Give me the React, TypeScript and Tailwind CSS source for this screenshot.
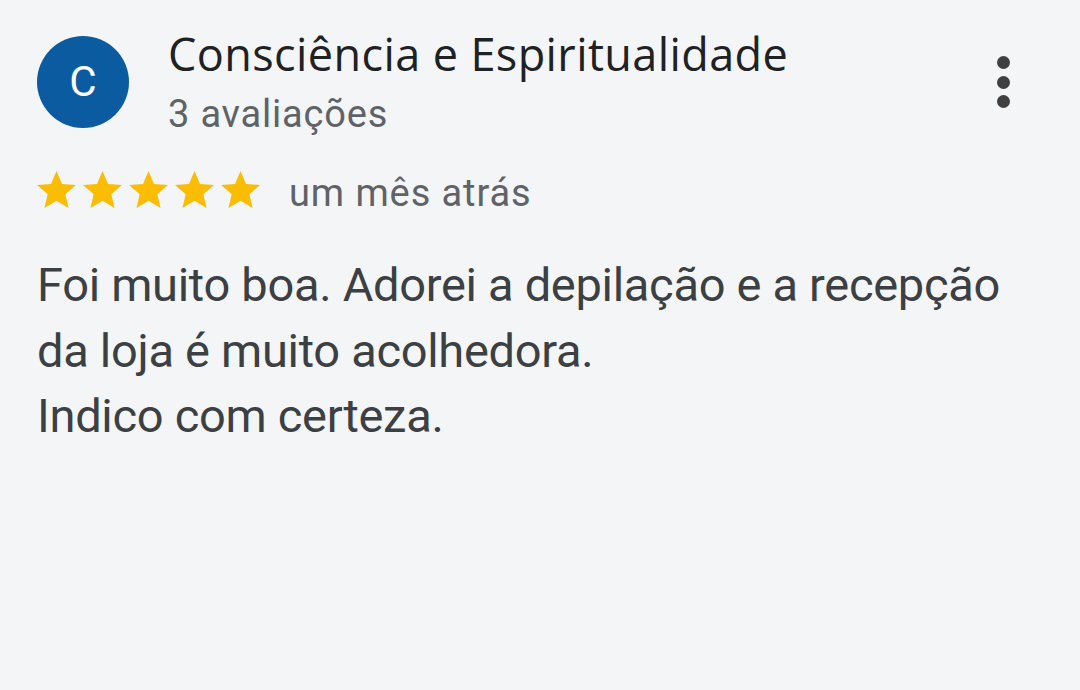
export default function App() {
  return (
    <div className="w-[1080px] h-[690px] bg-[#f4f5f7] overflow-hidden">
      <div className="pl-[37px] pr-[70px] pt-[28px]">
        {/* cabeçalho */}
        <div className="flex items-start">
          <div className="mt-[8px] w-[92px] h-[92px] rounded-full bg-[#0b5ba1] flex items-center justify-center shrink-0">
            <span className="text-white text-[42px] leading-none font-['Roboto',sans-serif]">C</span>
          </div>
          <div className="ml-[39px] flex-1">
            <p className="text-[45px] leading-[52px] tracking-[0.4px] text-[#202124] font-['Open_Sans',sans-serif]">
              Consciência e Espiritualidade
            </p>
            <p className="mt-[12px] text-[38px] leading-[44px] tracking-[0.8px] text-[#5f6368] font-['Roboto',sans-serif]">
              3 avaliações
            </p>
          </div>
          <div className="mt-[28px] flex flex-col items-center gap-[6.5px]">
            <span className="w-[13px] h-[13px] rounded-full bg-[#404040]" />
            <span className="w-[13px] h-[13px] rounded-full bg-[#404040]" />
            <span className="w-[13px] h-[13px] rounded-full bg-[#404040]" />
          </div>
        </div>

        {/* estrelas + data */}
        <div className="mt-[31px] flex items-center">
          <div className="flex gap-[7px]">
            {[0, 1, 2, 3, 4].map((i) => (
              <svg key={i} width="39" height="37" viewBox="2 2 20 19">
                <path
                  d="M12 17.27L18.18 21l-1.64-7.03L22 9.24l-7.19-.61L12 2 9.19 8.63 2 9.24l5.46 4.73L5.82 21z"
                  fill="#fbbc04"
                />
              </svg>
            ))}
          </div>
          <span className="ml-[29px] pt-[7px] text-[38px] leading-none tracking-[0.9px] text-[#5f6368] font-['Roboto',sans-serif]">
            um mês atrás
          </span>
        </div>

        {/* texto da avaliação */}
        <p className="mt-[40px] text-[47px] leading-[65.5px] tracking-[-0.3px] text-[#3c4043] font-['Roboto',sans-serif]">
          Foi muito boa. Adorei a depilação e a recepção
          <br />
          da loja é muito acolhedora.
          <br />
          Indico com certeza.
        </p>
      </div>
    </div>
  );
}
